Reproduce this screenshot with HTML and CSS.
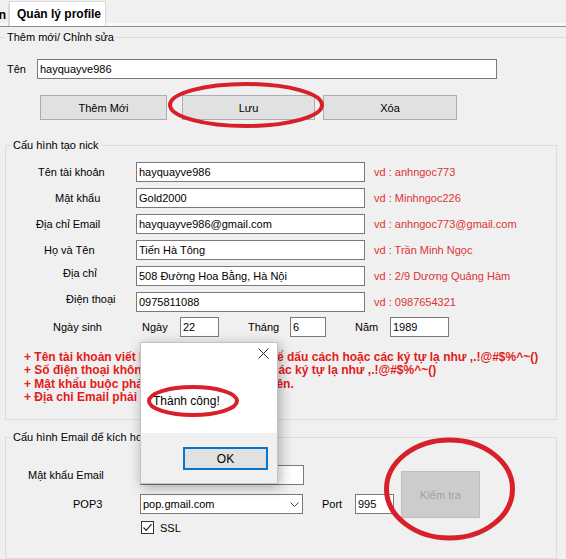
FILE: index.html
```html
<!DOCTYPE html>
<html lang="vi">
<head>
<meta charset="utf-8">
<title>Quản lý profile</title>
<link rel="stylesheet" href="styles.css">
</head>
<body>
<div class="page">
  <div class="tabs">
    <div class="tab tab-prev"><span>n</span></div>
    <div class="tab tab-active">Quản lý profile</div>
  </div>
  <div class="panel">
    <fieldset class="group group-edit">
      <legend>Thêm mới/ Chỉnh sửa</legend>
      <div class="name-row">
        <span class="name-label">Tên</span>
        <div class="field name-field">hayquayve986</div>
      </div>
      <div class="btn-row">
        <div class="btn btn-add">Thêm Mới</div>
        <div class="btn btn-save">Lưu</div>
        <div class="btn btn-del">Xóa</div>
      </div>
    </fieldset>

    <fieldset class="group group-nick">
      <legend>Cấu hình tạo nick</legend>
      <div class="nick-grid">
        <span class="lbl l-tk">Tên tài khoản</span>
        <div class="field">hayquayve986</div>
        <span class="hint">vd : anhngoc773</span>

        <span class="lbl l-mk">Mật khẩu</span>
        <div class="field">Gold2000</div>
        <span class="hint">vd : Minhngoc226</span>

        <span class="lbl l-em">Địa chỉ Email</span>
        <div class="field">hayquayve986@gmail.com</div>
        <span class="hint">vd : anhngoc773@gmail.com</span>

        <span class="lbl l-ht">Họ và Tên</span>
        <div class="field">Tiến Hà Tông</div>
        <span class="hint">vd : Trần Minh Ngọc</span>

        <span class="lbl l-dc up">Địa chỉ</span>
        <div class="field">508 Đường Hoa Bằng, Hà Nội</div>
        <span class="hint">vd : 2/9 Dương Quảng Hàm</span>

        <span class="lbl l-dt up">Điện thoại</span>
        <div class="field">0975811088</div>
        <span class="hint">vd : 0987654321</span>
      </div>
      <div class="dob-row">
        <span class="dob-label">Ngày sinh</span>
        <span class="dob-key">Ngày</span>
        <div class="field">22</div>
        <span class="dob-key dob-pad">Tháng</span>
        <div class="field">6</div>
        <span class="dob-key dob-pad">Năm</span>
        <div class="field">1989</div>
      </div>
      <div class="rules">
        <div>+ Tên tài khoản viết liền không dấu, không để dấu cách hoặc các ký tự lạ như ,.!@#$%^~()</div>
        <div>+ Số điện thoại không chứa dấu cách hoặc các ký tự lạ như ,.!@#$%^~()</div>
        <div>+ Mật khẩu buộc phải viết hoa chữ cái đầu tiên.</div>
        <div>+ Địa chỉ Email phải là Gmail.</div>
      </div>
    </fieldset>

    <fieldset class="group group-mail">
      <legend>Cấu hình Email để kích hoạt</legend>
      <div class="mail-grid">
        <span class="lbl l-mpw">Mật khẩu Email</span>
        <div class="field mail-pw"></div>
        <div class="btn btn-check">Kiểm tra</div>

        <span class="lbl l-pop">POP3</span>
        <div class="field combo"><span>pop.gmail.com</span>
          <svg class="chev" width="9" height="5" viewBox="0 0 9 5"><path d="M0.5 0.5 L4.5 4.5 L8.5 0.5" fill="none" stroke="#444" stroke-width="1"/></svg>
        </div>
        <span class="port-label">Port</span>
        <div class="field port-field">995</div>

        <div class="ssl">
          <span class="checkbox"><svg width="11" height="11" viewBox="0 0 11 11"><path d="M1.5 5.5 L4.2 8.3 L9.5 2.2" fill="none" stroke="#222" stroke-width="1.2"/></svg></span>
          <span>SSL</span>
        </div>
      </div>
    </fieldset>
  </div>

  <div class="dialog">
    <div class="dlg-body">
      <div class="dlg-title">
        <svg width="11" height="11" viewBox="0 0 11 11"><path d="M0.5 0.5 L10.5 10.5 M10.5 0.5 L0.5 10.5" stroke="#222" stroke-width="1"/></svg>
      </div>
      <div class="dlg-msg">Thành công!</div>
    </div>
    <div class="dlg-foot">
      <div class="dlg-ok">OK</div>
    </div>
  </div>

  <svg class="marks" width="566" height="559" viewBox="0 0 566 559">
    <ellipse cx="246" cy="105" rx="76" ry="21" fill="none" stroke="#d7202a" stroke-width="4"/>
    <ellipse cx="193" cy="401" rx="44" ry="14" fill="none" stroke="#d7202a" stroke-width="4"/>
    <ellipse cx="449.5" cy="489" rx="63" ry="49" fill="none" stroke="#d7202a" stroke-width="5"/>
  </svg>
</div>
</body>
</html>
```
FILE: styles.css
```css
* { box-sizing: border-box; }

html, body {
  margin: 0;
  padding: 0;
  background: #f0f0f0;
}

body {
  font-family: "Liberation Sans", Arial, sans-serif;
  font-size: 11px;
  color: #000;
}

.page {
  position: relative;
  width: 566px;
  height: 559px;
  overflow: hidden;
  background: #f0f0f0;
}

/* Tabs */
.tabs {
  display: flex;
  align-items: flex-end;
  height: 26px;
  background: linear-gradient(#f0f0f0 0, #f0f0f0 23px, #f9f9f9 23px);
}

.tab {
  font-size: 12px;
  font-weight: bold;
  display: flex;
  align-items: center;
}

.tab-prev {
  width: 9px;
  height: 22px;
  overflow: hidden;
  justify-content: flex-end;
  border-right: 1px solid #d9d9d9;
  padding-right: 2px;
}

.tab-active {
  width: 97px;
  height: 25px;
  background: #fff;
  border: 1px solid #d9d9d9;
  border-bottom: none;
  padding-left: 7px;
  padding-bottom: 1px;
}

.panel {
  border-top: 1px solid #8c8c8c;
}

/* Group boxes */
.group {
  margin: 0;
  padding: 0;
  min-width: 0;
  border: 1px solid #dcdcdc;
}

.group legend {
  font-size: 11px;
  line-height: 14px;
  padding: 0 2px;
}

.group-edit {
  margin-top: 3px;
  border-left: none;
  border-right: none;
  border-bottom: none;
  padding: 15px 0 0 7px;
}

.group-edit legend {
  margin-left: -2px;
}

.group-nick {
  margin: 18px 9px 0 5px;
  padding: 10px 0 15px 0;
}

.group-nick legend,
.group-mail legend {
  margin-left: 5px;
}

.group-mail {
  margin: 10px 9px 0 5px;
  padding: 21px 0 22px 0;
}

/* Fields */
.field {
  height: 20px;
  background: #fff;
  border: 1px solid #7a7a7a;
  padding: 0 2px;
  display: flex;
  align-items: center;
  white-space: nowrap;
  overflow: hidden;
  font-size: 11px;
}

.name-row {
  display: flex;
  align-items: center;
  height: 20px;
}

.name-label {
  width: 30px;
}

.name-field {
  width: 460px;
}

/* Buttons */
.btn-row {
  display: flex;
  margin-top: 16px;
}

.btn {
  height: 25px;
  background: #e1e1e1;
  border: 1px solid #adadad;
  display: flex;
  align-items: center;
  justify-content: center;
}

.btn-add { margin-left: 33px; width: 127px; }
.btn-save { margin-left: 15px; width: 133px; }
.btn-del { margin-left: 8px; width: 134px; }

/* Nick grid */
.nick-grid {
  display: grid;
  grid-template-columns: 130px 229px 1fr;
  grid-auto-rows: 20px;
  row-gap: 6px;
  align-items: center;
}

.lbl { white-space: nowrap; }

.l-tk { margin-left: 32px; }
.l-mk { margin-left: 49px; }
.l-em { margin-left: 30px; }
.l-ht { margin-left: 38px; }
.l-dc { margin-left: 57px; }
.l-dt { margin-left: 60px; }
.up { margin-bottom: 7px; }

.hint {
  padding-left: 9px;
  color: #dc3434;
  white-space: nowrap;
}

/* Date of birth row */
.dob-row {
  display: grid;
  grid-template-columns: 136px 38px 39px 71px 36px 64px 59px;
  height: 20px;
  margin-top: 5px;
  align-items: center;
}

.dob-label { padding-left: 47px; }
.dob-pad { padding-left: 29px; }

/* Rules */
.rules {
  margin: 14px 0 0 18px;
  color: #e21b1b;
  font-weight: bold;
  font-size: 12px;
  line-height: 13.25px;
  white-space: nowrap;
}

/* Mail grid */
.mail-grid {
  display: grid;
  grid-template-columns: 134px 164px 51px 39px 86px;
  grid-template-rows: 20px 20px 13px;
  row-gap: 9px;
  align-items: center;
}

.l-mpw { grid-column: 1; grid-row: 1; margin-left: 22px; }
.mail-pw { grid-column: 2; grid-row: 1; }
.btn-check { grid-column: 5; grid-row: 1 / 3; }
.l-pop { grid-column: 1; grid-row: 2; margin-left: 67px; }
.combo { grid-column: 2; grid-row: 2; width: 163px; }
.port-label { grid-column: 3; grid-row: 2; padding-left: 18px; }
.port-field { grid-column: 4; grid-row: 2; }
.ssl { grid-column: 2; grid-row: 3; margin-top: -4px; }

.combo {
  justify-content: space-between;
  padding-right: 3px;
}

.btn-check {
  align-self: start;
  margin: 6px 0 0 7px;
  width: 79px;
  height: 47px;
  background: #cccccc;
  border: 1px solid #bfbfbf;
  color: #a2a2a2;
}

.ssl {
  display: flex;
  align-items: center;
  gap: 6px;
  margin-left: 1px;
  height: 13px;
}

.checkbox {
  width: 13px;
  height: 13px;
  border: 1px solid #333;
  background: #fff;
  display: flex;
  align-items: center;
  justify-content: center;
}

/* Dialog */
.dialog {
  position: absolute;
  left: 140px;
  top: 342px;
  width: 138px;
  height: 142px;
  border: 1px solid #c4c4c4;
  background: #fff;
  box-shadow: 2px 3px 12px rgba(0, 0, 0, 0.32);
  display: flex;
  flex-direction: column;
  font-size: 12px;
}

.dlg-body {
  height: 90px;
  background: #fff;
}

.dlg-title {
  display: flex;
  justify-content: flex-end;
  padding: 5px 8px 0 0;
  height: 24px;
}

.dlg-msg {
  margin-top: 27px;
  padding-left: 12px;
  line-height: 14px;
}

.dlg-foot {
  flex: 1;
  background: #f0f0f0;
  display: flex;
  justify-content: flex-end;
  padding: 14px 9px 0 0;
}

.dlg-ok {
  width: 85px;
  height: 23px;
  background: #e1e1e1;
  border: 2px solid #0a74c8;
  display: flex;
  align-items: center;
  justify-content: center;
}

/* Red marks */
.marks {
  position: absolute;
  left: 0;
  top: 0;
  pointer-events: none;
}
```
